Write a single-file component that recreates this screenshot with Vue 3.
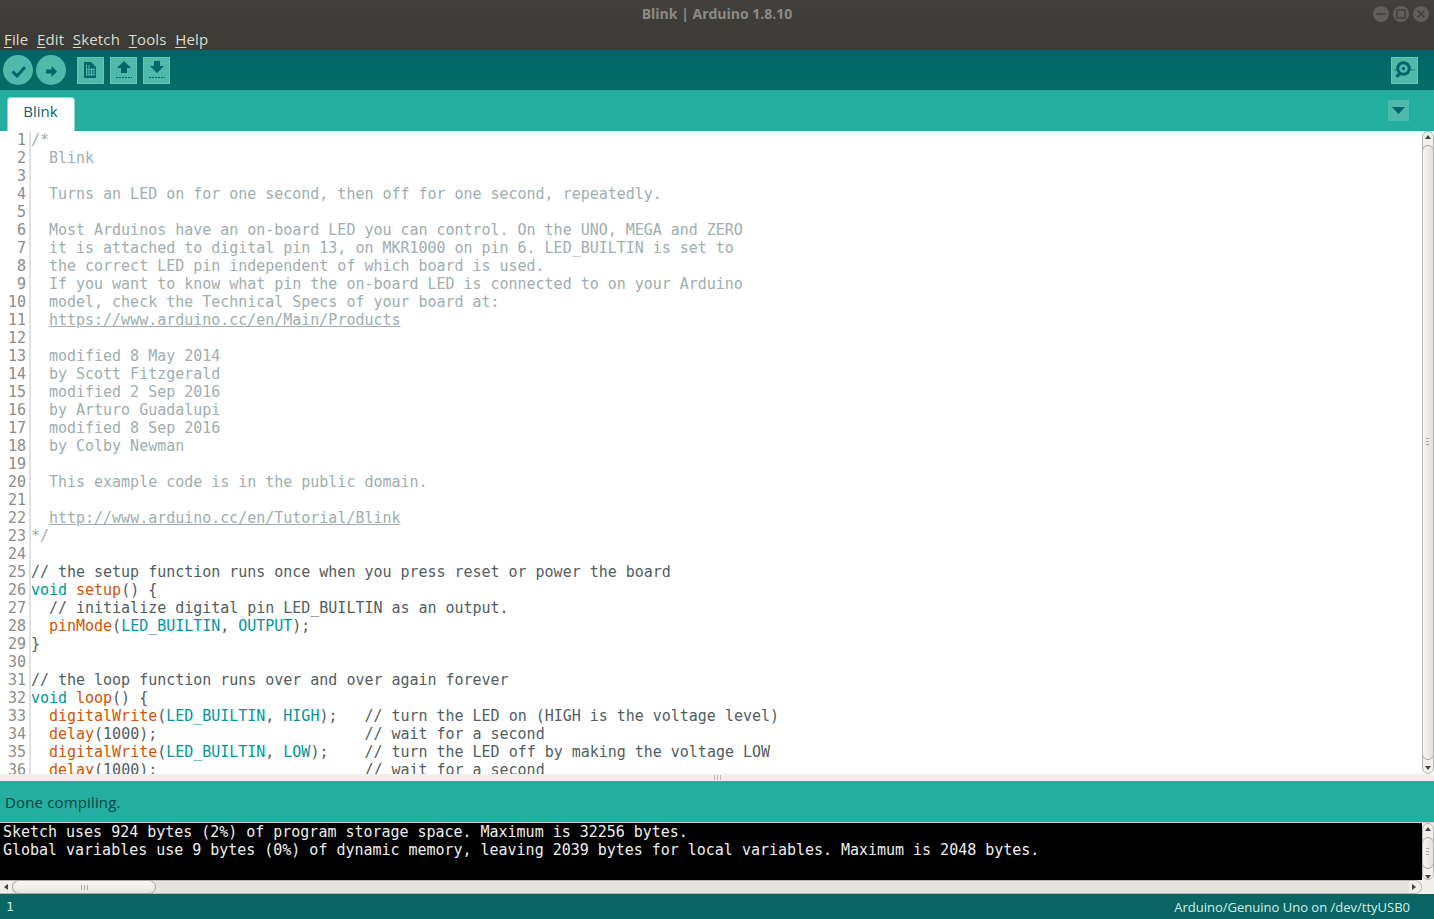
<script setup>
const c = t => [[t, 'cm']]
const lines = [
  c('/*'), c('  Blink'), c(''), c('  Turns an LED on for one second, then off for one second, repeatedly.'), c(''),
  c('  Most Arduinos have an on-board LED you can control. On the UNO, MEGA and ZERO'),
  c('  it is attached to digital pin 13, on MKR1000 on pin 6. LED_BUILTIN is set to'),
  c('  the correct LED pin independent of which board is used.'),
  c('  If you want to know what pin the on-board LED is connected to on your Arduino'),
  c('  model, check the Technical Specs of your board at:'),
  [['  ', 'cm'], ['https://www.arduino.cc/en/Main/Products', 'cm link']],
  c(''),
  c('  modified 8 May 2014'), c('  by Scott Fitzgerald'), c('  modified 2 Sep 2016'), c('  by Arturo Guadalupi'),
  c('  modified 8 Sep 2016'), c('  by Colby Newman'), c(''),
  c('  This example code is in the public domain.'), c(''),
  [['  ', 'cm'], ['http://www.arduino.cc/en/Tutorial/Blink', 'cm link']],
  c('*/'), c(''),
  [['// the setup function runs once when you press reset or power the board', 'lc']],
  [['void', 'kw'], [' ', ''], ['setup', 'fn'], ['() {', '']],
  [['  // initialize digital pin LED_BUILTIN as an output.', 'lc']],
  [['  ', ''], ['pinMode', 'fn'], ['(', ''], ['LED_BUILTIN', 'kw'], [', ', ''], ['OUTPUT', 'kw'], [');', '']],
  [['}', '']], [['', '']],
  [['// the loop function runs over and over again forever', 'lc']],
  [['void', 'kw'], [' ', ''], ['loop', 'fn'], ['() {', '']],
  [['  ', ''], ['digitalWrite', 'fn'], ['(', ''], ['LED_BUILTIN', 'kw'], [', ', ''], ['HIGH', 'kw'], [');   ', ''], ['// turn the LED on (HIGH is the voltage level)', 'lc']],
  [['  ', ''], ['delay', 'fn'], ['(1000);                       ', ''], ['// wait for a second', 'lc']],
  [['  ', ''], ['digitalWrite', 'fn'], ['(', ''], ['LED_BUILTIN', 'kw'], [', ', ''], ['LOW', 'kw'], [');    ', ''], ['// turn the LED off by making the voltage LOW', 'lc']],
  [['  ', ''], ['delay', 'fn'], ['(1000);                       ', ''], ['// wait for a second', 'lc']],
]
const menus = [['F', 'ile'], ['E', 'dit'], ['S', 'ketch'], ['T', 'ools'], ['H', 'elp']]
</script>

<template>
  <div class="app">
    <header class="titlebar">
      <div class="title">Blink | Arduino 1.8.10</div>
      <div class="wm">
        <span class="wm-btn"><svg width="16" height="16" viewBox="0 0 16 16"><path d="M3.500 8h9" stroke="#3c3b37" stroke-width="1.400"/></svg></span>
        <span class="wm-btn"><svg width="16" height="16" viewBox="0 0 16 16"><rect x="4" y="4" width="8" height="8" fill="none" stroke="#3c3b37" stroke-width="1.300"/></svg></span>
        <span class="wm-btn"><svg width="16" height="16" viewBox="0 0 16 16"><path d="M4.500 4.500l7 7M11.500 4.500l-7 7" stroke="#3c3b37" stroke-width="1.400"/></svg></span>
      </div>
    </header>
    <nav class="menubar">
      <span v-for="m in menus" :key="m[0]" class="menu"><u>{{ m[0] }}</u>{{ m[1] }}</span>
    </nav>

    <div class="toolbar">
      <button class="round"><svg width="30" height="30" viewBox="0 0 30 30"><path d="M9.500 16.500l4.500 4.500 8-9" fill="none" stroke="#006468" stroke-width="3"/></svg></button>
      <button class="round"><svg width="30" height="30" viewBox="0 0 30 30"><path d="M10 14.500h5.500V11l5.500 5.500-5.500 5.500v-3.500H10z" fill="#006468"/></svg></button>
      <button class="square first"><svg width="27" height="27" viewBox="0 0 27 27"><path d="M7 5h7l5 5v11H7z" fill="#006468"/><path d="M9 8h1v11H9zM11.500 8h1v11h-1zM14 11h1v8h-1zM16.500 11h1v8h-1zM9 12h8.500v1H9zM9 14.500h8.500v1H9zM9 17h8.500v1H9z" fill="#4fb9ab"/></svg></button>
      <button class="square"><svg width="27" height="27" viewBox="0 0 27 27"><path d="M14 4l7 7h-4v5h-6v-5H7z" fill="#006468"/><path d="M6 20.500h16" stroke="#006468" stroke-width="1.200" stroke-dasharray="2 1"/></svg></button>
      <button class="square"><svg width="27" height="27" viewBox="0 0 27 27"><path d="M11 4h6v5h4l-7 7-7-7h4z" fill="#006468"/><path d="M6 20.500h16" stroke="#006468" stroke-width="1.200" stroke-dasharray="2 1"/></svg></button>
      <button class="square serial"><svg width="27" height="27" viewBox="0 0 27 27"><circle cx="12.500" cy="11.500" r="5.800" fill="none" stroke="#006468" stroke-width="3"/><circle cx="12.500" cy="11.500" r="1.700" fill="#006468"/><path d="M9 16l-3.500 4" stroke="#006468" stroke-width="3.200"/><path d="M3.500 13h2M20 13h4.500" stroke="#006468" stroke-width="1.200" stroke-dasharray="1.500 1"/></svg></button>
    </div>

    <div class="tabbar">
      <div class="tab">Blink</div>
      <button class="tab-menu"><svg width="13" height="7" viewBox="0 0 13 7"><path d="M0 0h13L6.500 7z" fill="#006468"/></svg></button>
    </div>

    <main class="editor">
      <div class="code">
        <div v-for="(line, i) in lines" :key="i" class="line">
          <span class="num">{{ i + 1 }}</span><span class="text"><span v-for="(t, j) in line" :key="j" :class="t[1]">{{ t[0] }}</span></span>
        </div>
      </div>
      <div class="vscroll">
        <span class="arrow up"></span>
        <span class="thumb"><i class="grip"></i></span>
        <span class="arrow down"></span>
      </div>
    </main>

    <div class="divider"><i></i><i></i><i></i></div>
    <div class="status">Done compiling.</div>

    <section class="console">
      <pre class="output">Sketch uses 924 bytes (2%) of program storage space. Maximum is 32256 bytes.
Global variables use 9 bytes (0%) of dynamic memory, leaving 2039 bytes for local variables. Maximum is 2048 bytes.</pre>
      <div class="vwrap">
        <div class="vscroll small">
          <span class="arrow up"></span>
          <span class="thumb"><i class="grip"></i></span>
          <span class="arrow down"></span>
        </div>
      </div>
    </section>
    <div class="hscroll">
      <div class="hpill">
        <span class="arrow left"></span>
        <span class="hthumb"><i></i><i></i><i></i></span>
        <span class="htrack"></span>
        <span class="arrow right"></span>
      </div>
    </div>

    <footer class="footer">
      <span class="mono-one">1</span>
      <span>Arduino/Genuino Uno on /dev/ttyUSB0</span>
    </footer>
  </div>
</template>

<style scoped>
.app { width: 1434px; height: 919px; display: flex; flex-direction: column; overflow: hidden; font-family: "Open Sans", "Noto Sans", sans-serif; background: #fff; }
.titlebar { height: 28px; flex: none; background: linear-gradient(#42413d, #3c3b37); position: relative; display: flex; align-items: center; justify-content: center; }
.title { font-size: 14px; font-weight: 700; color: #8b8a85; padding-bottom: 2px; }
.wm { position: absolute; right: 5px; top: 6px; display: flex; gap: 4px; }
.wm-btn { width: 16px; height: 16px; border-radius: 50%; background: #5f5e5a; display: block; }
.wm-btn svg { display: block; }
.menubar { height: 22px; flex: none; background: #3c3b37; display: flex; align-items: center; padding-left: 4px; gap: 8.600px; color: #dfdbd2; font-size: 15px; letter-spacing: .15px; }
.menu u { text-underline-offset: 2px; }
.toolbar { height: 40px; flex: none; background: linear-gradient(#006468, #076c66); display: flex; align-items: center; padding-left: 3px; gap: 3px; }
button { border: 0; padding: 0; margin: 0; display: block; }
button svg { display: block; }
.round { width: 30px; height: 30px; border-radius: 50%; background: #4fb9ab; }
.square { width: 27px; height: 27px; background: #4fb9ab; margin-left: 3px; box-shadow: inset 0 0 0 1px #63c4b7; }
.square.first { margin-left: 8px; }
.serial { margin-left: auto; margin-right: 16px; }
.tabbar { height: 41px; flex: none; background: #23ae9f; display: flex; align-items: flex-end; padding-left: 7px; position: relative; }
.tab { width: 68px; height: 34px; box-sizing: border-box; background: #fff; border: 1px solid #8fd6cc; border-bottom: 0; border-radius: 4px 4px 0 0; text-align: center; line-height: 26px; font-size: 15px; color: #0b5f60; padding-right: 1px; }
.tab-menu { position: absolute; right: 25px; top: 10px; width: 21px; height: 21px; background: #4fb9ab; display: flex; align-items: center; justify-content: center; }
.editor { height: 643px; flex: none; display: flex; background: #fff; overflow: hidden; }
.code { flex: 1; min-width: 0; overflow: hidden; font-family: "DejaVu Sans Mono", monospace; font-size: 15px; letter-spacing: -0.02px; line-height: 18px; color: #525d62; }
.line { display: flex; height: 18px; white-space: pre; }
.num { width: 26px; flex: none; text-align: right; color: #8c8c8c; margin-right: 3px; }
.text { border-left: 2px solid #e2e2e2; flex: 1; min-width: 0; }
.cm { color: #a0aeaf; }
.link { text-decoration: underline; }
.lc { color: #525d62; }
.kw { color: #00979c; }
.fn { color: #d35400; }
.vscroll { width: 12px; flex: none; display: flex; flex-direction: column; background: #f0efeb; border: 1px solid #b9b7b1; border-radius: 6px; box-sizing: border-box; overflow: hidden; }
.arrow { flex: none; display: block; position: relative; }
.arrow::after { content: ""; position: absolute; border: 3px solid transparent; }
.up, .down { height: 13px; }
.up::after { left: 2px; top: 0; border-bottom: 4px solid #444; }
.down::after { left: 2px; bottom: 0; border-top: 4px solid #444; }
.thumb { flex: 1; background: linear-gradient(to right, #f8f7f5, #e2e0db); border: 1px solid #a9a69e; border-radius: 6px; margin: 0 -1px; position: relative; display: block; }
.grip { position: absolute; left: 3px; width: 3px; top: 292px; height: 7px; background: repeating-linear-gradient(#a8a8a8 0 1px, transparent 1px 3px); }
.vwrap { width: 12px; flex: none; background: #f0efeb; display: flex; }
.vscroll.small { justify-content: space-between; }
.vscroll.small .thumb { flex: none; height: 30px; }
.vscroll.small .grip { top: 10px; }
.divider { height: 7px; flex: none; background: #f0efeb; display: flex; justify-content: center; align-items: center; gap: 2px; }
.divider i { width: 1px; height: 5px; background: #bdbbb6; display: block; }
.status { height: 42px; flex: none; background: #23ae9f; font-size: 15px; line-height: 42px; letter-spacing: .15px; padding-left: 5px; color: #0a4543; box-sizing: border-box; border-bottom: 1px solid #cfcfc8; }
.console { height: 57px; flex: none; display: flex; background: #000; }
.output { flex: 1; margin: 0; padding: 0 0 0 3px; font-family: "DejaVu Sans Mono", monospace; font-size: 15px; letter-spacing: -0.02px; line-height: 18px; color: #eee; overflow: hidden; }
.hscroll { height: 14px; flex: none; display: flex; background: #f0efeb; padding-right: 12px; }
.hpill { flex: 1; display: flex; align-items: stretch; background: #e6e4df; border: 1px solid #b9b7b1; border-left: 0; border-radius: 0 7px 7px 0; box-sizing: border-box; }
.hscroll .arrow { width: 12px; background: #f0efeb; }
.left::after { left: 1px; top: 3px; border-right: 4px solid #444; }
.right::after { right: 2px; top: 3px; border-left: 4px solid #444; }
.right { border-radius: 0 7px 7px 0; }
.hthumb { width: 144px; flex: none; background: linear-gradient(#f8f7f5, #e8e6e1); border: 1px solid #a9a69e; border-radius: 7px; box-sizing: border-box; display: flex; align-items: center; justify-content: center; gap: 2px; margin: -1px 0; }
.hthumb i { display: block; width: 1px; height: 5px; background: #aaa; }
.htrack { flex: 1; }
.footer { height: 25px; flex: none; background: #086563; color: #d5efeb; display: flex; justify-content: space-between; align-items: center; padding: 0 24px 0 6px; box-sizing: border-box; font-size: 13px; }
.mono-one { font-family: "DejaVu Sans Mono", monospace; }
</style>
